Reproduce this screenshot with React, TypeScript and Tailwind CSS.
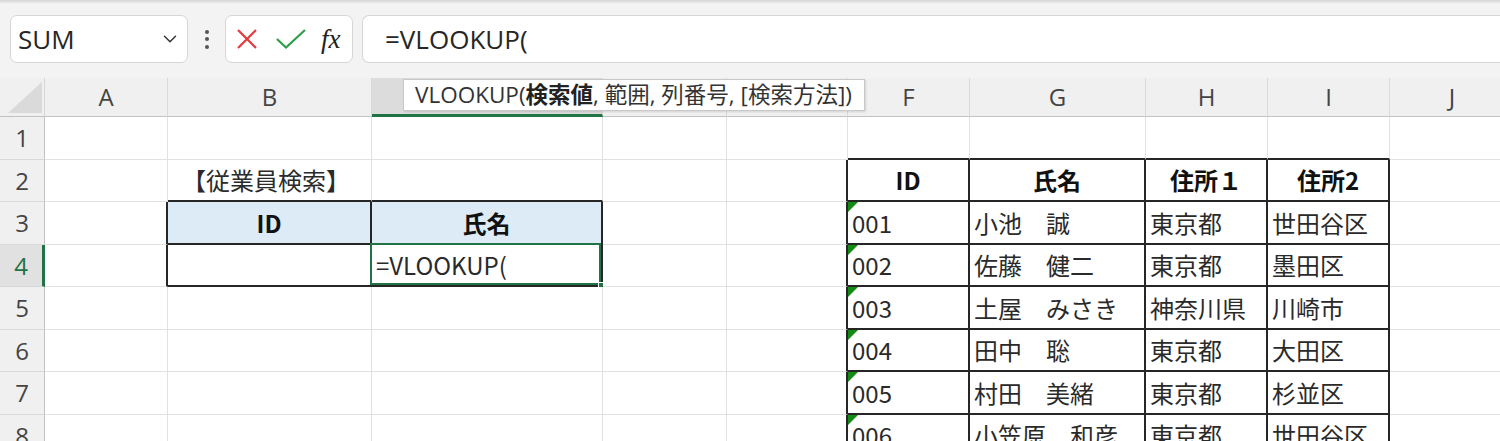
import { ChevronDown } from 'lucide-react';

/* ── sheet data ── */
const cols = ['A', 'B', 'C', 'D', 'E', 'F', 'G', 'H', 'I', 'J'];
const rowNums = [1, 2, 3, 4, 5, 6, 7, 8];

type Cell = { t?: string; bold?: boolean; center?: boolean; fill?: boolean; tri?: boolean; sel?: boolean; indent?: boolean };

const staff = [
  ['001', '小池　誠', '東京都', '世田谷区'],
  ['002', '佐藤　健二', '東京都', '墨田区'],
  ['003', '土屋　みさき', '神奈川県', '川崎市'],
  ['004', '田中　聡', '東京都', '大田区'],
  ['005', '村田　美緒', '東京都', '杉並区'],
  ['006', '小笠原　和彦', '東京都', '世田谷区'],
];

const cells: Record<number, Record<string, Cell>> = {
  2: {
    B: { t: '【従業員検索】', indent: true },
    F: { t: 'ID', bold: true, center: true },
    G: { t: '氏名', bold: true, center: true },
    H: { t: '住所１', bold: true, center: true },
    I: { t: '住所2', bold: true, center: true },
  },
  3: {
    B: { t: 'ID', bold: true, center: true, fill: true },
    C: { t: '氏名', bold: true, center: true, fill: true },
  },
  4: { C: { t: '=VLOOKUP(', sel: true } },
};
staff.forEach((s, i) => {
  const r = i + 3;
  cells[r] = cells[r] || {};
  cells[r].F = { t: s[0], tri: true };
  cells[r].G = { t: s[1] };
  cells[r].H = { t: s[2] };
  cells[r].I = { t: s[3] };
});

// header letters hidden under the function tooltip
const covered = ['D', 'E'];

function borderCls(r: number, ci: number) {
  const t1 = r >= 3 && r <= 4 && ci >= 1 && ci <= 2;
  const t2 = r >= 2 && r <= 8 && ci >= 5 && ci <= 8;
  const blackR = t1 || t2 || (r >= 3 && r <= 4 && ci === 0) || (r >= 2 && r <= 8 && ci === 4);
  const blackB = t1 || t2 || (r === 2 && ci >= 1 && ci <= 2) || (r === 1 && ci >= 5 && ci <= 8);
  return `${blackR ? 'border-r-2 border-r-[#262626]' : 'border-r border-r-[#e1e1e1]'} ${
    blackB ? 'border-b-2 border-b-[#262626]' : 'border-b border-b-[#e1e1e1]'
  }`;
}

export default function App() {
  return (
    <div className="relative w-[1500px] h-[441px] overflow-hidden bg-[#f3f3f3] font-['Open_Sans','Noto_Sans_CJK_JP',sans-serif]">
      {/* ribbon shadow */}
      <div className="h-[4px] bg-gradient-to-b from-[#d4d4d4] to-[#f3f3f3]" />

      {/* formula bar */}
      <div className="h-[74px] flex items-start pt-[11px] pl-[10px]">
        <div className="w-[178px] h-[48px] bg-white border border-[#d6d6d6] rounded-[7px] flex items-center pl-[7px] pr-[6px]">
          <span className="flex-1 text-[26px] text-[#262626] leading-none">SUM</span>
          <ChevronDown size={22} strokeWidth={1.6} className="text-[#333]" />
        </div>
        <div className="w-[37px] h-[48px] flex flex-col items-center justify-center gap-[3.5px]">
          <div className="w-[4px] h-[4px] rounded-full bg-[#555]" />
          <div className="w-[4px] h-[4px] rounded-full bg-[#555]" />
          <div className="w-[4px] h-[4px] rounded-full bg-[#555]" />
        </div>
        <div className="w-[128px] h-[48px] bg-white border border-[#d6d6d6] rounded-[7px] flex items-center">
          <svg width="22" height="22" viewBox="0 0 22 22" className="ml-[10px]">
            <path d="M2 2 L20 20 M20 2 L2 20" stroke="#e5393d" strokeWidth="2.2" fill="none" />
          </svg>
          <svg width="32" height="22" viewBox="0 0 32 22" className="ml-[17px]">
            <path d="M2 11 L11 19.5 L30 2" stroke="#2e9e4a" strokeWidth="2.2" fill="none" />
          </svg>
          <span className="ml-[14px] text-[27px] italic font-medium leading-none text-[#222] font-['Liberation_Serif',serif]">fx</span>
        </div>
        <div className="ml-[9px] flex-1 h-[48px] bg-white border border-[#d6d6d6] border-r-0 rounded-l-[7px] flex items-center pl-[22px]">
          <span className="text-[26px] leading-none text-[#262626]">=VLOOKUP(</span>
        </div>
      </div>

      {/* sheet */}
      <div className="grid grid-cols-[45px_123px_204px_231px_124px_121px_122px_176px_122px_122px_125px] grid-rows-[39px_43px_42px_43px_42px_43px_42px_43px_42px] bg-white">
        {/* column headers */}
        <div className="bg-[#f0f0f0] border-b border-b-[#c2c2c2] border-r border-r-[#d6d6d6]">
          <svg width="44" height="38" viewBox="0 0 44 38">
            <polygon points="8,35 42,35 42,4" fill="#dadada" />
          </svg>
        </div>
        {cols.map((c) =>
          c === 'C' ? (
            <div key={c} className="bg-[#dcdcdc] border-b-[3px] border-b-[#217346] border-r border-r-[#d6d6d6] flex items-center justify-center text-[24px] text-[#217346]">
              {c}
            </div>
          ) : (
            <div key={c} className="bg-[#f0f0f0] border-b border-b-[#c2c2c2] border-r border-r-[#dadada] flex items-center justify-center text-[24px] text-[#444]">
              {covered.includes(c) ? '' : c}
            </div>
          )
        )}

        {/* rows */}
        {rowNums.map((r) => (
          <Row key={r} r={r} />
        ))}
      </div>

      {/* function tooltip */}
      <div className="absolute left-[403px] top-[79px] w-[462px] h-[32px] bg-white border border-[#c8c8c8] shadow-[1px_1px_2px_rgba(0,0,0,0.12)] flex items-center pl-[11px] text-[22.5px] leading-none text-[#333] whitespace-nowrap">
        VLOOKUP(<b className="font-bold text-[#222]">検索値</b>, 範囲, 列番号, [検索方法])
      </div>
    </div>
  );
}

function Row({ r }: { r: number }) {
  const active = r === 4;
  return (
    <>
      <div
        className={`flex items-center justify-center text-[24px] ${
          active
            ? 'bg-[#e1e1e1] text-[#217346] border-r-[3px] border-r-[#217346] border-b border-b-[#d6d6d6]'
            : 'bg-[#f0f0f0] text-[#444] border-r border-r-[#c2c2c2] border-b border-b-[#d9d9d9]'
        }`}
      >
        {r}
      </div>
      {cols.map((c, ci) => {
        const cell = cells[r]?.[c];
        return (
          <div
            key={c}
            className={`relative flex items-center ${cell?.center ? 'justify-center' : cell?.indent ? 'pl-[14px]' : 'pl-[4px]'} ${
              cell?.fill ? 'bg-[#ddebf7]' : 'bg-white'
            } ${borderCls(r, ci)} font-['Noto_Sans_CJK_JP',sans-serif] text-[24px] leading-none whitespace-nowrap ${
              cell?.bold ? 'font-bold text-[#111]' : 'text-[#2a2a2a]'
            }`}
          >
            {cell?.tri && (
              <div className="absolute left-0 top-0 w-0 h-0 border-t-[10px] border-t-[#138a13] border-r-[10px] border-r-transparent" />
            )}
            {cell?.sel && (
              <>
                <div className="absolute -left-[2px] -top-[2px] right-0 bottom-0 border-2 border-[#217346] pointer-events-none" />
                <div className="absolute -right-[4px] -bottom-[4px] w-[7px] h-[7px] bg-[#217346] border border-white" />
              </>
            )}
            {cell?.t}
          </div>
        );
      })}
    </>
  );
}
